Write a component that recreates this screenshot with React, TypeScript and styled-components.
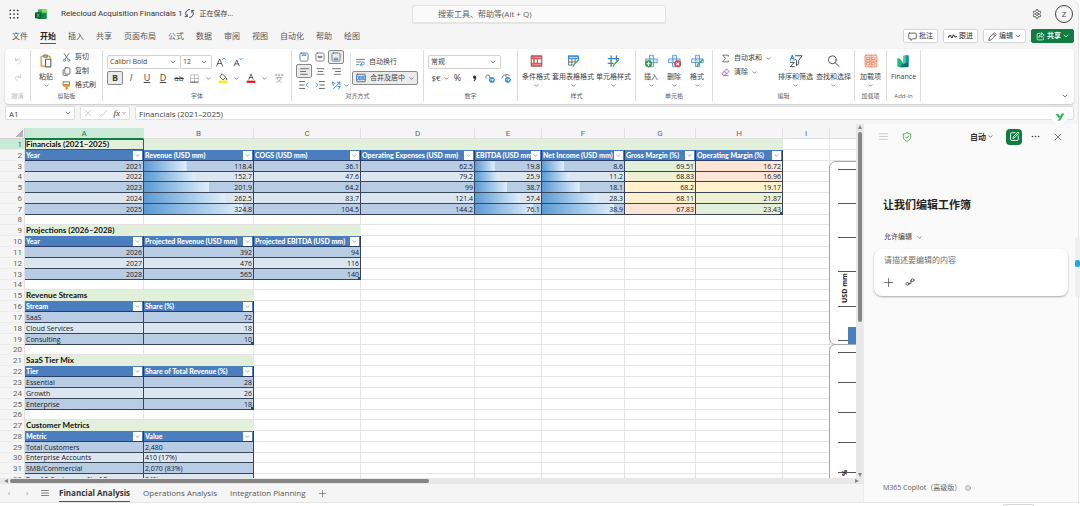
import React from "react";
import styled, { createGlobalStyle, css } from "styled-components";

const ui = `"Open Sans", "Noto Sans CJK SC", sans-serif`;
const cellFont = `Lato, "Noto Sans CJK SC", sans-serif`;

const Global = createGlobalStyle`
  *, *::before, *::after { box-sizing: border-box; }
  html, body { margin: 0; background: #fff; }
  body { font-family: ${ui}; font-size: 7px; line-height: 10px; color: #424242; }
  button, input, select, textarea { font: inherit; color: inherit; margin: 0; }
  button { padding: 0; border: 0; background: none; white-space: nowrap; cursor: pointer; }
  svg { display: block; flex: none; }
`;

/* ---------- icons ---------- */

const Svg = styled.svg.attrs({ viewBox: "0 0 16 16", "aria-hidden": true })<{ $s?: number }>`
  width: ${(p) => p.$s ?? 10}px;
  height: ${(p) => p.$s ?? 10}px;
  fill: none;
  stroke: currentColor;
  stroke-width: 1.3;
  stroke-linecap: round;
  stroke-linejoin: round;
`;

type IconProps = { s?: number };

const Chevron = ({ s = 6 }: IconProps) => (
  <Svg $s={s}><path strokeWidth="2" d="M3 5.5 8 10.5 13 5.5" /></Svg>
);
const Waffle = () => (
  <Svg $s={10}>
    {[2, 8, 14].map((y) => [2, 8, 14].map((x) => (
      <circle key={`${x}-${y}`} cx={x} cy={y} r="1.4" fill="#333" stroke="none" />
    )))}
  </Svg>
);
const ExcelLogo = () => (
  <Svg $s={12}>
    <g stroke="none">
      <path fill="#2fb457" d="M5 1.5h9.5a1.2 1.2 0 0 1 1.2 1.2V8H3.8V2.7A1.2 1.2 0 0 1 5 1.5z" />
      <path fill="#8bdc5c" d="M9.5 1.5h5a1.2 1.2 0 0 1 1.2 1.2v3.2H9.5z" />
      <path fill="#138a43" d="M3.8 7h11.9v6.3a1.2 1.2 0 0 1-1.2 1.2H5a1.2 1.2 0 0 1-1.2-1.2z" />
      <rect x="0" y="5.5" width="8.6" height="8.6" rx="1.4" fill="#0d5c30" />
    </g>
    <path stroke="#7fc79b" strokeWidth="1" d="m3 8 2.600 3.600M5.600 8 3 11.600" />
  </Svg>
);
const Sync = () => (
  <Svg $s={11}>
    <path d="M4.500 12.500A5.700 5.700 0 0 1 6 2.700M11.500 3.500A5.700 5.700 0 0 1 10 13.300M1.700 12.500h3v-3M14.300 3.500h-3v3M6 2.700A5.700 5.700 0 0 1 8 2.300M10 13.300a5.700 5.700 0 0 1-2 .4" />
  </Svg>
);
const Gear = () => (
  <Svg $s={10}>
    <circle cx="8" cy="8" r="2.3" />
    <path d="m6.8 1.2-.4 1.9-1.5.8-1.8-.6L1.9 5.4l1.4 1.3v2.6l-1.4 1.3 1.2 2.1 1.8-.6 1.5.8.4 1.9h2.4l.4-1.9 1.5-.8 1.8.6 1.2-2.1-1.4-1.3V6.7l1.4-1.3-1.2-2.1-1.8.6-1.5-.8-.4-1.9z" />
  </Svg>
);
const CommentIcon = () => (
  <Svg $s={9}><path d="M2.5 2h11A1.2 1.2 0 0 1 14.700 3.200v7.600a1.200 1.200 0 0 1-1.200 1.200H8.500L5 15v-3H2.500a1.200 1.200 0 0 1-1.200-1.200V3.200A1.200 1.200 0 0 1 2.500 2z" /></Svg>
);
const Activity = () => (
  <Svg $s={9}><path strokeWidth="1.800" d="M1 9.500c1.500-4 3.500-4.500 4.500-1.500s2.200 3 3-.5 2.300-2 2.800 0 2 1.500 3.700.5M1 9.500l0-2" /></Svg>
);
const Pencil = () => (
  <Svg $s={9}><path d="m1.500 14.500 1-4.300 8.200-8.200a1.600 1.600 0 0 1 2.300 0l1 1a1.600 1.600 0 0 1 0 2.300l-8.200 8.200zM9.500 3.300l3.300 3.300" /></Svg>
);
const ShareIcon = () => (
  <Svg $s={9}><path d="M7 2.500H4A2 2 0 0 0 2 4.500V12a2 2 0 0 0 2 2h7.500a2 2 0 0 0 2-2v-1.500M10 1.500l4.500 4L10 9.500V7.300c-2.300 0-3.700.7-5 2.700.2-3.500 2-5.700 5-6z" /></Svg>
);
const Undo = () => <Svg $s={8}><path d="M3 2v5h5M3.300 6.700C6 3.500 9.500 3 11.700 5.200s1.800 4.800-.2 6.600L8.500 14.500" /></Svg>;
const Redo = () => <Svg $s={8}><path d="M13 2v5H8M12.700 6.700C10 3.500 6.500 3 4.300 5.200s-1.800 4.800.2 6.600l3 2.700" /></Svg>;
const Paste = () => (
  <Svg $s={14}>
    <path stroke="#e8912d" strokeWidth="1.500" d="M6 14H3.500A1 1 0 0 1 2.500 13V3.500a1 1 0 0 1 1-1H5M10 2.500h1.500a1 1 0 0 1 1 1V5" />
    <path stroke="#777" d="M5.500 1.300h4v2.200h-4z" />
    <path fill="#fff" stroke="#666" d="M7.500 6h6v8.700h-6z" />
  </Svg>
);
const Scissors = () => (
  <Svg $s={9}>
    <path stroke="#444" d="m4 1 6.500 10M12 1 5.500 11" />
    <g stroke="#2b88d8"><circle cx="4" cy="13" r="2" /><circle cx="12" cy="13" r="2" /></g>
  </Svg>
);
const Copy = () => (
  <Svg $s={9}><rect x="5" y="1.500" width="9" height="11" rx="1.500" /><path d="M3 4.500a1.500 1.500 0 0 0-1 1.500v7a2 2 0 0 0 2 2h5a2 2 0 0 0 1.700-1" /></Svg>
);
const Brush = () => (
  <Svg $s={9}>
    <path stroke="#555" d="M2.500 1.500h11v5h-11z" />
    <path fill="#f0a33a" stroke="#d87f1b" d="M3 6.500h10v3H9.500V14L7 15V9.500H3z" />
  </Svg>
);
const GrowFont = ({ down }: { down?: boolean }) => (
  <Svg $s={10}>
    {down ? <path d="m2 14 4-9 4 9M3.400 11h5.200" /> : <path d="M1 14.500 5.800 3l4.800 11.500M2.800 10.500h6" />}
    <path stroke="#2b88d8" d={down ? "m10.500 2 2.300 2.500L15 2" : "M10.500 4 12.800 1.500 15 4"} />
  </Svg>
);
const Borders = () => (
  <Svg $s={9}><path strokeWidth="1" stroke="#999" d="M1.500 1.500h13v13h-13zM8 1.500v13M1.500 8h13" /><path stroke="#333" d="M1.500 14.500h13" /></Svg>
);
const FillIcon = () => (
  <Svg $s={10}><path d="m7 1.500 5.500 5.500-4.500 4-4.500-4.500zM13.500 8.500c1 1.300 1 2.300 0 2.700-1-.4-1-1.400 0-2.700" /><path stroke="#f5ee00" strokeWidth="3.500" strokeLinecap="butt" d="M1 14h14" /></Svg>
);
const FontColor = () => (
  <Svg $s={10}><path d="m4.500 10 3.500-8.500 3.500 8.500M5.700 7.200h4.600" /><path stroke="#e81010" strokeWidth="3.500" strokeLinecap="butt" d="M1 14h14" /></Svg>
);
const Phonetic = () => (
  <Svg $s={10} opacity=".45"><path d="M2 2v2h2V2M7 2v2h2V2M12 2v2h2V2M3 7.500h10M8 6v1.500M11.500 7.500c-1 3.500-3.500 6-7 7.500M4.500 7.500c1 3.500 3.500 6 7 7.500" /></Svg>
);
const VAlign = ({ at }: { at: number }) => (
  <Svg $s={10}>
    <rect x="1.500" y="1.500" width="13" height="13" rx="2.500" stroke="#666" />
    <path stroke={at === 8 ? "#555" : "#2b88d8"} d={`M5 ${at - 1}h6M5 ${at + 1}h6`} />
  </Svg>
);
const HAlign = ({ d }: { d: string }) => <Svg $s={9}><path d={d} /></Svg>;
const Indent = ({ right }: { right?: boolean }) => (
  <Svg $s={10}>
    <path d={right ? "M7 2.500h8M8 8h7M7 13.500h8" : "M1 2.500h8M1 8h7M1 13.500h8"} />
    <path stroke="#2b88d8" d={right ? "m1.500 4.500 3.500 3.500-3.500 3.500" : "M14.500 4.500 11 8l3.500 3.500"} />
  </Svg>
);
const Orientation = () => (
  <Svg $s={10}><path stroke="#2b88d8" strokeWidth="1.500" d="M4 14 14 4M10 3.500h4.200v4.200M2 3.500l2 5M2 3.500l4.500 2M11 10.500h4l-3 4" /></Svg>
);
const Wrap = () => (
  <Svg $s={9}><path d="M1 2.500h14M1 7h4M1 12h4" /><path stroke="#2b88d8" strokeWidth="1.500" d="M6.500 7H12a2.500 2.500 0 0 1 0 5H8M10 9.800 7.700 12l2.300 2.300" /></Svg>
);
const Merge = () => (
  <Svg $s={10}>
    <rect x="1.200" y="2" width="13.600" height="12" rx="1" stroke="#555" />
    <path fill="#c9e3f8" stroke="#2b88d8" d="M1.500 5.300h13v5.400h-13z" />
    <path stroke="#1a6fb8" d="M4 8h8M5.500 6.600 4 8l1.500 1.400M10.500 6.600 12 8l-1.500 1.400" />
  </Svg>
);
const CommaStyle = () => (
  <Svg $s={9}><path fill="#333" stroke="none" d="M8.200 2.500a3 3 0 0 1 3 3.200c0 3.300-1.700 6.200-4.200 7.500l-.8-1c1.200-.9 2-2.100 2.200-3.700A2.800 2.800 0 0 1 5.300 5.500a3 3 0 0 1 2.900-3z" /></Svg>
);
const Decimal = ({ dec }: { dec?: boolean }) => (
  <Svg $s={10}>
    <path stroke="#555" d={dec ? "M1.500 8C3 4 5 2.500 7.500 3c1.500-1 4.500-1 5.500 1M8 3.500V6" : "M1.500 8V5.500C3 2.500 5.500 2 7.500 5v2.500"} />
    <circle cx="11" cy="11" r="4" fill="#2b88d8" stroke="#2b88d8" />
    <path stroke="#fff" d="M8.800 11h4.400M11.700 9.500 13.200 11l-1.500 1.500" />
  </Svg>
);
const CondFormat = () => (
  <Svg $s={13}>
    <path fill="#fff" stroke="#666" d="M1.500 2h13v12h-13z" />
    <path fill="#f68a8a" stroke="#d94a4a" d="M2 2h12v3.300H2zM2 10.700h12V14H2z" />
    <path fill="#fff" stroke="#d94a4a" d="M5 5.300h4v5.400H5z" /><path stroke="#888" d="M4.500 2v12" />
  </Svg>
);
const PenOver = () => <path stroke="#3aa757" strokeWidth="1.600" d="m7.500 14.500 1.200-2.200 5.800-5.800" />;
const TableFormat = () => (
  <Svg $s={13}>
    <path stroke="#555" strokeWidth="1" d="M2 2h12v4M2 2v11h4M6 5.500V13M10 5.500V9M2 9.200h8" />
    <path fill="#a9d3f5" stroke="#2b88d8" d="M2 2h12v3.300H2z" /><PenOver />
  </Svg>
);
const CellStyles = () => (
  <Svg $s={13}><path stroke="#555" d="M5 1.500v13M11.500 1.500V7" /><path stroke="#2b88d8" strokeWidth="1.400" d="M1.500 5h13M1.500 11h6" /><PenOver /></Svg>
);
const CellsBase = () => (
  <>
    <path fill="#dcecfa" stroke="#4a90cf" strokeWidth="1" d="M6 1h4.500v14H6z" />
    <path fill="#dcecfa" stroke="#4a90cf" strokeWidth="1" d="M1 5.500h14v4.500H1zM6 5.500V10M10.500 5.500V10" />
  </>
);
const CellInsert = () => (
  <Svg $s={13}><CellsBase /><circle cx="4.300" cy="11.500" r="3.700" fill="#2f9e44" stroke="#2f9e44" /><path stroke="#fff" d="M4.300 9.500v4M2.300 11.500h4" /></Svg>
);
const CellDelete = () => (
  <Svg $s={13}><CellsBase /><circle cx="12" cy="11.500" r="3.700" fill="#e04545" stroke="#e04545" /><path stroke="#fff" d="m10.700 10.200 2.600 2.600M13.300 10.200l-2.600 2.600" /></Svg>
);
const CellFormat = () => <Svg $s={13}><CellsBase /><PenOver /></Svg>;
const Sigma = () => <Svg $s={9}><path d="M13 4V2H3l5 6-5 6h10v-2" /></Svg>;
const Eraser = () => (
  <Svg $s={9}><path stroke="#9b4db5" fill="#f1def7" d="m2 9.500 7-7a1.500 1.500 0 0 1 2.100 0l2.400 2.400a1.500 1.500 0 0 1 0 2.100l-6 6H5z" /><path stroke="#9b4db5" d="m5.500 6 4.500 4.500M5 13.500h8" /></Svg>
);
const SortFilter = () => (
  <Svg $s={14}>
    <path stroke="#2b88d8" d="m1.500 7 2.200-5.500L6 7M2.300 5.200H5" />
    <path strokeWidth="1.100" d="M1.500 9.500h4.500l-4.500 5H6M7.500 2h7.500l-4 5.500v3.500l-2.500 2.500v-6L7.500 6" />
  </Svg>
);
const Search = () => <Svg $s={13}><circle cx="6.500" cy="6.500" r="4.800" strokeWidth="1.100" /><path strokeWidth="1.100" d="m10 10 4.700 4.700" /></Svg>;
const AddIns = () => (
  <Svg $s={14}>
    <g stroke="#e2714a" strokeWidth="1"><rect x="1.300" y="1.300" width="13.400" height="13.400" rx="1" />
      <path d="M3.500 3.500h3v3h-3zM9.500 3.500h3v3h-3zM3.500 9.500h3v3h-3zM9.500 9.500h3v3h-3zM8 1.500v13M1.500 8h13" /></g>
  </Svg>
);
const FinanceLogo = () => (
  <Svg $s={14}>
    <g stroke="none">
      <path fill="#1eb980" d="M1.500 4.500c3 0 5 3 6.500 5.500v5H3a1.500 1.500 0 0 1-1.500-1.500z" />
      <path fill="#0f6b74" d="M8 10 14.500 4v9.500A1.500 1.500 0 0 1 13 15H5z" />
      <path fill="#57d08b" d="M8 3.500c0-1.300 1-2 2.300-2h4.200v6.500L8 12z" />
      <path fill="#1b8fb3" d="M11 1.500h2a1.500 1.500 0 0 1 1.500 1.500v6L11 11z" />
    </g>
  </Svg>
);
const Cross = ({ s = 8 }: IconProps) => <Svg $s={s}><path d="m2 2 12 12M14 2 2 14" /></Svg>;
const Check = () => <Svg $s={9}><path d="m1.500 8.500 4.500 4.500L15 3" /></Svg>;
const Menu = ({ s = 9 }: IconProps) => <Svg $s={s}><path d="M1 3h14M1 8h14M1 13h14" /></Svg>;
const Plus = ({ s = 8 }: IconProps) => <Svg $s={s}><path d="M8 1v14M1 8h14" /></Svg>;
const Shield = () => <Svg $s={10}><path d="M8 1c2 1.500 4 2 6 2v4.500c0 3.500-2.500 6-6 7.500-3.500-1.500-6-4-6-7.500V3c2 0 4-.5 6-2zM5.300 8l2 2 3.500-3.800" /></Svg>;
const Compose = () => <Svg $s={11}><path d="M9 2.500H4A1.700 1.700 0 0 0 2.300 4.200V12A1.700 1.700 0 0 0 4 13.700h7.800a1.700 1.700 0 0 0 1.700-1.700V7M6 10.200l.5-2L13 1.700l1.500 1.500L8 9.700z" /></Svg>;
const LinkIcon = () => <Svg $s={10}><circle cx="3.800" cy="11" r="2.300" /><circle cx="12.200" cy="5" r="2.300" /><path strokeWidth="1.100" d="M6 11.800c3.800.6 1.500-6.500 4-7.300M5.800 10c2 0 1.500 1.500 3 1s.7-4 2-4.500" /></Svg>;
const Info = () => <Svg $s={6}><circle cx="8" cy="8" r="6.500" /><path d="M8 7.500v3.500M8 5v.2" /></Svg>;
const Dots = () => (
  <Svg $s={9}>{[2.5, 8, 13.5].map((x) => <circle key={x} cx={x} cy="8" r="1.300" fill="#333" stroke="none" />)}</Svg>
);
const Leaf = () => (
  <Svg $s={10}>
    <path fill="#2fb457" stroke="none" d="M1 3h4.500l2.700 4.200L6.500 10z" />
    <path fill="#2fb457" stroke="none" d="M10.500 2.500h4.500L8.500 13 4 14.500l2-3.500z" />
  </Svg>
);

/* ---------- shell ---------- */

const Page = styled.div`
  display: flex;
  flex-direction: column;
  height: 100vh;
  min-height: 400px;
  padding-right: 1px;
  background: #fff;
`;
const Shell = styled.div`
  flex: 1;
  min-height: 0;
  display: flex;
  flex-direction: column;
  background: #f5f5f5;
  border: solid #e6e6e6;
  border-width: 0 1px 1px 0;
  border-radius: 0 6px 0 0;
`;
const BottomEdge = styled.footer`
  display: flex;
  justify-content: flex-end;
  height: 3px;
  padding: 1px 45px 0 0;
  overflow: hidden;
  &::after {
    content: "";
    width: 31px;
    border: solid #d8d8d8;
    border-width: 1px 1px 0;
    border-radius: 2px 2px 0 0;
  }
`;
const TopBar = styled.header`
  display: grid;
  grid-template-columns: 1fr 254px 1fr;
  align-items: center;
  height: 27px;
  padding: 0 5px;
`;
const TopLeft = styled.div`
  display: flex;
  align-items: center;
  padding-left: 4px;
  svg + svg { margin-left: 16px; }
`;
const FileName = styled.h1`
  margin: 0 2px 0 14px;
  font-family: Roboto, sans-serif;
  font-size: 8px;
  font-weight: 400;
  color: #333;
  white-space: nowrap;
`;
const SaveState = styled.span`
  margin-left: 4px;
  white-space: nowrap;
`;
const SearchBox = styled.input`
  width: 100%;
  height: 18px;
  padding: 0 25px;
  border: 1px solid #e3e3e3;
  border-radius: 2px;
  background: #fafafa;
  box-shadow: 0 1px 1px #0001;
  font-size: 8px;
  &::placeholder { color: #616161; opacity: 1; }
`;
const TopRight = styled.div`
  display: flex;
  justify-content: flex-end;
  align-items: center;
  gap: 13px;
`;
const Avatar = styled.button`
  width: 18px;
  height: 18px;
  border: 1px solid #444;
  border-radius: 50%;
  font-size: 8px;
`;
const TabRow = styled.div`
  display: flex;
  justify-content: space-between;
  align-items: flex-start;
  height: 22px;
  padding: 2px 4px 0 12px;
`;
const Tabs = styled.nav`
  display: flex;
  gap: 12px;
`;
const Tab = styled.button<{ $on?: boolean }>`
  height: 15px;
  font-size: 8px;
  line-height: 14px;
  color: #555;
  border-bottom: 1px solid transparent;
  ${(p) => p.$on && css`
    color: #242424;
    font-weight: 700;
    border-color: #107c41;
  `}
`;
const Actions = styled.div`
  display: flex;
  gap: 5px;
`;
const Action = styled.button<{ $primary?: boolean }>`
  display: flex;
  align-items: center;
  gap: 2px;
  height: 14px;
  padding: 0 4px;
  border: 1px solid #d6d6d6;
  border-radius: 2px;
  background: #fff;
  color: #333;
  ${(p) => p.$primary && css`
    border-color: #107c41;
    background: #107c41;
    color: #fff;
    font-weight: 700;
  `}
`;

/* ---------- ribbon ---------- */

const Ribbon = styled.section`
  display: flex;
  height: 55px;
  margin: 0 4px 0 5px;
  padding: 1px 0 3px;
  border-radius: 4px;
  background: #fff;
  box-shadow: 0 1px 2px #0003;
`;
const Group = styled.div<{ $w: number }>`
  display: flex;
  flex-direction: column;
  width: ${(p) => p.$w}px;
  border-right: 1px solid #dcdcdc;
`;
const GroupBody = styled.div<{ $gap?: number; $pad?: number }>`
  flex: 1;
  display: flex;
  justify-content: ${(p) => (p.$pad === undefined ? "center" : "flex-start")};
  gap: ${(p) => p.$gap ?? 0}px;
  padding: 0 ${(p) => p.$pad ?? 0}px;
`;
const GroupLabel = styled.div<{ $dim?: boolean }>`
  height: 9px;
  font-size: 6px;
  line-height: 9px;
  text-align: center;
  color: ${(p) => (p.$dim ? "#b5b5b5" : "#616161")};
  white-space: nowrap;
`;
const Stack = styled.div<{ $gap?: number; $top?: number }>`
  display: flex;
  flex-direction: column;
  gap: ${(p) => p.$gap ?? 0}px;
  padding-top: ${(p) => p.$top ?? 0}px;
`;
const Line = styled.div<{ $gap?: number }>`
  display: flex;
  align-items: center;
  gap: ${(p) => p.$gap ?? 0}px;
`;
const BigButton = styled.button`
  display: flex;
  flex-direction: column;
  align-items: center;
  padding-top: 4px;
  svg:first-child { height: 14px; }
  span { margin-top: 4px; }
  span + svg { margin-top: 1px; }
`;
const Tool = styled.button<{ $on?: boolean; $w?: number; $dim?: boolean; $letter?: boolean }>`
  display: flex;
  align-items: center;
  justify-content: center;
  width: ${(p) => p.$w ?? 16}px;
  height: 14px;
  border: 1px solid transparent;
  border-radius: 2px;
  font-size: ${(p) => (p.$letter ? 9 : 8)}px;
  color: ${(p) => (p.$dim ? "#bdbdbd" : "#424242")};
  ${(p) => p.$on && css`
    border-color: #8a8a8a;
    background: #ebebeb;
  `}
`;
const TextTool = styled.button<{ $on?: boolean }>`
  display: flex;
  align-items: center;
  gap: 4px;
  height: 14px;
  padding: 0 3px;
  border: 1px solid transparent;
  border-radius: 2px;
  ${(p) => p.$on && css`
    border-color: #8a8a8a;
    background: #ebebeb;
  `}
`;
const SelectWrap = styled.label<{ $w: number }>`
  display: flex;
  align-items: center;
  width: ${(p) => p.$w}px;
  height: 14px;
  padding-right: 4px;
  border: 1px solid #d1d1d1;
  border-radius: 2px;
  background: #fff;
  & + & { margin-left: -1px; }
`;
const Select = styled.select`
  flex: 1;
  min-width: 0;
  height: 12px;
  padding: 0 2px;
  border: 0;
  background: none;
  appearance: none;
`;
const Rule = styled.div`
  width: 1px;
  height: 38px;
  margin-top: 3px;
  background: #e0e0e0;
`;
const Collapse = styled.button`
  align-self: flex-end;
  margin: 0 6px 2px auto;
`;

const Picker = ({ label, value, w }: { label: string; value: string; w: number }) => (
  <SelectWrap $w={w}>
    <Select aria-label={label} defaultValue={value}><option>{value}</option></Select>
    <Chevron />
  </SelectWrap>
);
const Big = ({ icon, text, menu = true }: { icon: React.ReactNode; text: string; menu?: boolean }) => (
  <BigButton>{icon}<span>{text}</span>{menu && <Chevron s={5} />}</BigButton>
);

/* ---------- formula bar ---------- */

const FormulaRow = styled.div`
  display: flex;
  gap: 5px;
  height: 14px;
  margin: 2px 4px 4px 5px;
`;
const FieldBox = styled.div<{ $w?: number }>`
  display: flex;
  align-items: center;
  justify-content: space-between;
  ${(p) => (p.$w ? `width: ${p.$w}px` : "flex: 1")};
  padding: 0 3px;
  border: 1px solid #dedede;
  border-radius: 2px;
  background: #fff;
`;
const Field = styled.input`
  flex: 1;
  min-width: 0;
  height: 12px;
  padding: 0;
  border: 0;
  background: none;
  font-size: 8px;
`;
const Fx = styled.i`
  font-family: "Liberation Serif", serif;
  font-size: 9px;
`;
const LeafBadge = styled.div`
  position: absolute;
  z-index: 1;
  right: 10px;
  top: -16px;
  display: grid;
  place-items: center;
  width: 17px;
  height: 17px;
  border-radius: 50%;
  background: #fff;
  box-shadow: 0 0 2px #0001;
`;

/* ---------- sheet ---------- */

const Main = styled.main`
  flex: 1;
  min-height: 0;
  display: flex;
`;
const SheetPane = styled.section`
  flex: 1;
  min-width: 0;
  display: flex;
  flex-direction: column;
`;
const GridRow = styled.div`
  flex: 1;
  min-height: 0;
  display: flex;
`;
const GridView = styled.div`
  position: relative;
  flex: 1;
  min-width: 0;
  margin-top: 4px;
  overflow: hidden;
  background: #fff;
`;
const Grid = styled.table`
  width: 940px;
  table-layout: fixed;
  border-collapse: separate;
  border-spacing: 0;
  font-family: ${cellFont};
  font-size: 7px;
  line-height: 9px;
  color: #222;
`;
const Row = styled.tr<{ $tight?: boolean }>`
  height: ${(p) => (p.$tight ? 10 : 11)}px;
`;
const ColHead = styled.th<{ $on?: boolean }>`
  padding: 0;
  border: solid #e0e0e0;
  border-width: 0 1px 1px 0;
  background: ${(p) => (p.$on ? "#c9ead6" : "#f5f5f5")};
  color: ${(p) => (p.$on ? "#217346" : "#666")};
  font-family: Roboto, sans-serif;
  font-size: 8px;
  font-weight: 400;
  ${(p) => p.$on && "border-bottom-color: #107c41;"}
`;
const RowHead = styled(ColHead)`
  padding-right: 2px;
  text-align: right;
  border-bottom-color: #ececec;
`;
const Corner = styled.td`
  padding: 0;
  border: solid #d0d0d0;
  border-width: 0 1px 1px 0;
  background: linear-gradient(135deg, transparent 50%, #b5b5b5 50%) no-repeat right 1px bottom 1px / 7px 7px #f5f5f5;
`;

type Kind = "blank" | "title" | "head" | "odd" | "even";
const Cell = styled.td<{ $kind: Kind; $left?: boolean; $tint?: string; $bar?: number; $end?: boolean; $active?: boolean }>`
  position: relative;
  padding: 0 1px;
  overflow: hidden;
  white-space: nowrap;
  text-align: ${(p) => (p.$left ? "left" : "right")};
  border: solid #e4e4e4;
  border-width: 0 1px 1px 0;
  ${(p) => p.$kind === "title" && css`
    background: #e2efda;
    border-color: #e2efda;
    font-size: 8px;
    font-weight: 700;
    color: #111;
    overflow: visible;
  `}
  ${(p) => p.$kind === "head" && css`
    background: #4a7ebf;
    border-color: #2a3f63;
    font-weight: 900;
    color: #fff;
  `}
  ${(p) => (p.$kind === "odd" || p.$kind === "even") && css`
    font-family: ${ui};
    background-color: ${p.$tint ?? (p.$kind === "odd" ? "#b8cce4" : "#dce6f1")};
    border-color: #3a4658;
  `}
  ${(p) => p.$bar && css`
    background-image: linear-gradient(90deg, #5b9bd5, #dfeefb);
    background-repeat: no-repeat;
    background-size: ${p.$bar}% 100%;
  `}
  ${(p) => p.$end && css`
    &::after {
      content: "";
      position: absolute;
      right: 0;
      bottom: 0;
      width: 2px;
      height: 2px;
      background: #1f4e8c;
    }
  `}
  ${(p) => p.$active && css`
    outline: 1px solid #107c41;
    outline-offset: -1px;
  `}
`;
const HeadInner = styled.div`
  display: flex;
  align-items: center;
  height: 9px;
  span { flex: 1; min-width: 0; overflow: hidden; }
`;
const Filter = styled.button`
  display: grid;
  place-items: center;
  width: 9px;
  height: 9px;
  background: #fff;
  color: #777;
`;

type Block = {
  title: string; span: number; heads: string[]; rows: string[][];
  leftCols?: number; open?: boolean;
};
const blocks: Block[] = [
  {
    title: "Financials (2021–2025)", span: 8,
    heads: ["Year", "Revenue (USD mm)", "COGS (USD mm)", "Operating Expenses (USD mm)", "EBITDA (USD mm)", "Net Income (USD mm)", "Gross Margin (%)", "Operating Margin (%)"],
    rows: [
      ["2021", "118.4", "36.1", "62.5", "19.8", "8.6", "69.51", "16.72"],
      ["2022", "152.7", "47.6", "79.2", "25.9", "11.2", "68.83", "16.96"],
      ["2023", "201.9", "64.2", "99", "38.7", "18.1", "68.2", "19.17"],
      ["2024", "262.5", "83.7", "121.4", "57.4", "28.3", "68.11", "21.87"],
      ["2025", "324.8", "104.5", "144.2", "76.1", "38.9", "67.83", "23.43"],
    ],
  },
  {
    title: "Projections (2026–2028)", span: 3,
    heads: ["Year", "Projected Revenue (USD mm)", "Projected EBITDA (USD mm)"],
    rows: [["2026", "392", "94"], ["2027", "476", "116"], ["2028", "565", "140"]],
  },
  {
    title: "Revenue Streams", span: 2, leftCols: 1, heads: ["Stream", "Share (%)"],
    rows: [["SaaS", "72"], ["Cloud Services", "18"], ["Consulting", "10"]],
  },
  {
    title: "SaaS Tier Mix", span: 2, leftCols: 1, heads: ["Tier", "Share of Total Revenue (%)"],
    rows: [["Essential", "28"], ["Growth", "26"], ["Enterprise", "18"]],
  },
  {
    title: "Customer Metrics", span: 2, leftCols: 2, open: true, heads: ["Metric", "Value"],
    rows: [["Total Customers", "2,480"], ["Enterprise Accounts", "410 (17%)"], ["SMB/Commercial", "2,070 (83%)"], ["Top 10 Customers % of Rev", "24%"]],
  },
];
const bars: Record<number, number[]> = {
  1: [39, 47, 60, 75, 91],
  4: [30, 36, 49, 68, 88],
  5: [27, 33, 46, 68, 88],
};
const tints: Record<number, string[]> = {
  6: ["#e2efda", "#eef0d3", "#fff2cc", "#feefce", "#fce4d6"],
  7: ["#fce4d6", "#fce6d5", "#fff2cc", "#eef0d3", "#e2efda"],
};
const columns = [119, 110, 107, 114, 67, 83, 71, 87, 47, 110];
const letters = "ABCDEFGHIJ".split("");
const tightRows = [4, 30];

type SheetRow = { kind: Kind; block?: Block; index?: number };
const sheetRows: SheetRow[] = blocks.flatMap((block, b) => [
  ...(b ? [{ kind: "blank" as Kind }] : []),
  { kind: "title" as Kind, block },
  { kind: "head" as Kind, block },
  ...block.rows.map((_, index) => ({ kind: (index % 2 ? "even" : "odd") as Kind, block, index })),
]);

const renderCell = (row: SheetRow, c: number, first: boolean) => {
  const { block, kind, index = 0 } = row;
  if (!block || c >= block.span) return <Cell key={c} $kind="blank" />;
  if (kind === "title") {
    return <Cell key={c} $kind="title" $left $active={first && c === 0}>{c === 0 ? block.title : null}</Cell>;
  }
  if (kind === "head") {
    return (
      <Cell key={c} as="th" $kind="head" $left>
        <HeadInner><span>{block.heads[c]}</span><Filter aria-label={`筛选 ${block.heads[c]}`}><Chevron s={5} /></Filter></HeadInner>
      </Cell>
    );
  }
  const main = block.span === 8;
  return (
    <Cell
      key={c}
      $kind={kind}
      $left={c < (block.leftCols ?? 0)}
      $bar={main ? bars[c]?.[index] : undefined}
      $tint={main ? tints[c]?.[index] : undefined}
      $end={!block.open && index === block.rows.length - 1 && c === block.span - 1}
    >
      {block.rows[index][c]}
    </Cell>
  );
};

const Charts = styled.svg`
  position: absolute;
  left: 829px;
  top: 33px;
  width: 240px;
  height: 330px;
  text { font: 700 7px ${ui}; fill: #222; }
`;
const ChartArt = () => (
  <Charts viewBox="0 0 240 330" aria-label="图表">
    <rect x=".5" y=".5" width="239" height="183" rx="6" fill="#fff" stroke="#a6a6a6" />
    <path stroke="#555" d="M9 8.500h220M9 42.500h220M9 76.500h220M9 110.500h220M9 145.500h220M9 179.500h220" />
    <rect x="19" y="166" width="24" height="17" fill="#4a7ebf" />
    <text transform="rotate(-90 18 142)" x="18" y="142">USD mm</text>
    <rect x=".5" y="183.500" width="239" height="183" rx="6" fill="#fff" stroke="#a6a6a6" />
    <path stroke="#555" d="M9 191.500h220M9 221.500h220M9 251.500h220M9 281.500h220M9 311.500h220" />
    <text transform="rotate(-90 18 315)" x="18" y="315">%</text>
  </Charts>
);
const VBar = styled.div`
  display: flex;
  flex-direction: column;
  align-items: center;
  justify-content: space-between;
  width: 7px;
  padding: 1px 0;
  background: #e8e8e8;
`;
const HBar = styled.div`
  display: flex;
  align-items: center;
  justify-content: space-between;
  height: 6px;
  padding: 0 4px;
  background: #e8e8e8;
`;
const Thumb = styled.div<{ $v?: boolean }>`
  ${(p) => (p.$v ? "width: 4px; flex: 0 0 54%; margin: 3px 0 auto;" : "height: 4px; flex: 0 0 49%; margin: 0 auto 0 2px;")}
  border-radius: 2px;
  background: #858585;
`;
const Arrow = styled.svg`
  width: 4px;
  height: 4px;
  fill: #858585;
`;
const SheetTabs = styled.nav`
  display: flex;
  align-items: center;
  gap: 13px;
  height: 18px;
  padding-left: 5px;
`;
const SheetIcon = styled.button<{ $dim?: boolean }>`
  display: grid;
  place-items: center;
  width: 8px;
  height: 10px;
  font-size: 9px;
  color: ${(p) => (p.$dim ? "#aaa" : "#444")};
`;
const SheetTab = styled.button<{ $on?: boolean }>`
  height: 18px;
  padding-top: 1px;
  font-size: 8px;
  color: #555;
  border-bottom: 1px solid transparent;
  ${(p) => p.$on && css`
    font-weight: 700;
    color: #333;
    border-color: #107c41;
  `}
`;

/* ---------- copilot pane ---------- */

const Copilot = styled.aside`
  position: relative;
  display: flex;
  flex-direction: column;
  width: 215px;
  padding: 4px 10px 9px;
  background: #fafafa;
  border-left: 1px solid #ebebeb;
`;
const PaneHead = styled.div`
  display: flex;
  align-items: center;
  height: 17px;
  padding: 0 6px 0 5px;
`;
const PaneButton = styled.button<{ $c?: string; $gap?: number; $push?: boolean }>`
  display: flex;
  align-items: center;
  gap: 2px;
  margin-left: ${(p) => (p.$push ? "auto" : `${p.$gap ?? 0}px`)};
  font-size: 8px;
  color: ${(p) => p.$c ?? "#333"};
`;
const ComposeButton = styled(PaneButton)`
  justify-content: center;
  width: 16px;
  height: 16px;
  border-radius: 4px;
  background: #107c41;
  color: #fff;
`;
const PaneTitle = styled.h2`
  margin: 50px 0 0 9px;
  font-size: 11px;
  line-height: 20px;
  font-weight: 700;
  color: #242424;
`;
const ModeButton = styled.button`
  display: flex;
  align-items: center;
  align-self: flex-start;
  gap: 5px;
  margin: 16px 0 6px 10px;
  height: 12px;
`;
const Prompt = styled.form`
  height: 47px;
  padding: 5px 10px 9px;
  border-radius: 8px;
  background: #fff;
  box-shadow: 0 1px 2px #0005;
  display: flex;
  flex-direction: column;
  justify-content: space-between;
`;
const PromptText = styled.textarea`
  height: 13px;
  padding: 0;
  border: 0;
  resize: none;
  outline: none;
  overflow: hidden;
  background: none;
  font-size: 8px;
  line-height: 12px;
  &::placeholder { color: #707070; opacity: 1; }
`;
const PaneFoot = styled.div`
  display: flex;
  align-items: center;
  gap: 4px;
  margin: auto 0 0 9px;
  color: #616161;
`;
const SideMark = styled.div`
  position: absolute;
  right: -2px;
  top: 113px;
  width: 5px;
  height: 60px;
  padding-top: 23px;
  background: #f0f0f0;
  border-radius: 2px 0 0 2px;
  &::before {
    content: "";
    display: block;
    height: 7px;
    border-radius: 2px;
    background: #1ea7e0;
  }
`;

const tabs = ["文件", "开始", "插入", "共享", "页面布局", "公式", "数据", "审阅", "视图", "自动化", "帮助", "绘图"];

export default function App() {
  return (
    <Page>
      <Global />
      <Shell>
        <TopBar>
          <TopLeft>
            <Waffle /><ExcelLogo />
            <FileName>Relecloud Acquisition Financials 1</FileName>
            <Sync /><SaveState>正在保存...</SaveState>
          </TopLeft>
          <SearchBox type="search" aria-label="搜索" placeholder="搜索工具、帮助等(Alt + Q)" />
          <TopRight>
            <button aria-label="设置"><Gear /></button>
            <Avatar>Z</Avatar>
          </TopRight>
        </TopBar>

        <TabRow>
          <Tabs>{tabs.map((t) => <Tab key={t} $on={t === "开始"}>{t}</Tab>)}</Tabs>
          <Actions>
            <Action><CommentIcon />批注</Action>
            <Action><Activity />跟进</Action>
            <Action><Pencil />编辑<Chevron /></Action>
            <Action $primary><ShareIcon />共享<Chevron /></Action>
          </Actions>
        </TabRow>

        <Ribbon>
          <Group $w={26}>
            <GroupBody>
              <Stack $gap={3} $top={4}>
                <Tool $dim aria-label="撤消"><Undo /></Tool>
                <Tool $dim aria-label="恢复"><Redo /></Tool>
              </Stack>
            </GroupBody>
            <GroupLabel $dim>撤消</GroupLabel>
          </Group>

          <Group $w={72}>
            <GroupBody $gap={5} $pad={8}>
              <Big icon={<Paste />} text="粘贴" />
              <Stack>
                <TextTool><Scissors />剪切</TextTool>
                <TextTool><Copy />复制</TextTool>
                <TextTool><Brush />格式刷</TextTool>
              </Stack>
            </GroupBody>
            <GroupLabel>剪贴板</GroupLabel>
          </Group>

          <Group $w={189}>
            <GroupBody $pad={4}>
              <Stack $gap={2} $top={5}>
                <Line>
                  <Picker label="字体" value="Calibri Bold" w={74} />
                  <Picker label="字号" value="12" w={32} />
                  <Tool $w={18} aria-label="增大字号"><GrowFont /></Tool>
                  <Tool aria-label="减小字号"><GrowFont down /></Tool>
                </Line>
                <Line>
                  <Tool $letter $on><b>B</b></Tool>
                  <Tool $letter><i>I</i></Tool>
                  <Tool $letter><u>U</u></Tool>
                  <Tool $letter><u>D</u></Tool>
                  <Tool><s>ab</s></Tool>
                  <Tool $w={15} aria-label="边框"><Borders /></Tool>
                  <Tool $w={13} aria-label="边框选项"><Chevron s={5} /></Tool>
                  <Tool $w={15} aria-label="填充颜色"><FillIcon /></Tool>
                  <Tool $w={13} aria-label="填充选项"><Chevron s={5} /></Tool>
                  <Tool $w={15} aria-label="字体颜色"><FontColor /></Tool>
                  <Tool $w={13} aria-label="颜色选项"><Chevron s={5} /></Tool>
                  <Tool aria-label="拼音"><Phonetic /></Tool>
                </Line>
              </Stack>
            </GroupBody>
            <GroupLabel>字体</GroupLabel>
          </Group>

          <Group $w={132}>
            <GroupBody $pad={4} $gap={1}>
              <Stack>
                <Line>
                  <Tool aria-label="顶端对齐"><VAlign at={4.5} /></Tool>
                  <Tool aria-label="垂直居中"><VAlign at={8} /></Tool>
                  <Tool $on aria-label="底端对齐"><VAlign at={11} /></Tool>
                </Line>
                <Line>
                  <Tool $on aria-label="左对齐"><HAlign d="M1 3h14M1 8h9M1 13h12" /></Tool>
                  <Tool aria-label="居中"><HAlign d="M2 3h12M4 8h8M2 13h12" /></Tool>
                  <Tool aria-label="右对齐"><HAlign d="M1 3h14M6 8h9M4 13h11" /></Tool>
                </Line>
                <Line>
                  <Tool aria-label="减少缩进"><Indent /></Tool>
                  <Tool aria-label="增加缩进"><Indent right /></Tool>
                  <Tool aria-label="方向"><Orientation /></Tool>
                  <Chevron s={5} />
                </Line>
              </Stack>
              <Rule />
              <Stack $gap={2} $top={5}>
                <TextTool><Wrap />自动换行</TextTool>
                <TextTool $on><Merge />合并及居中<Chevron s={5} /></TextTool>
              </Stack>
            </GroupBody>
            <GroupLabel>对齐方式</GroupLabel>
          </Group>

          <Group $w={94}>
            <GroupBody $pad={4}>
              <Stack $gap={2} $top={5}>
                <Picker label="数字格式" value="常规" w={73} />
                <Line>
                  <Tool>$€</Tool>
                  <Tool $w={5} aria-label="货币选项"><Chevron s={5} /></Tool>
                  <Tool $letter $w={17}>%</Tool>
                  <Tool aria-label="千位分隔样式"><CommaStyle /></Tool>
                  <Tool aria-label="增加小数位数"><Decimal /></Tool>
                  <Tool aria-label="减少小数位数"><Decimal dec /></Tool>
                </Line>
              </Stack>
            </GroupBody>
            <GroupLabel>数字</GroupLabel>
          </Group>

          <Group $w={118}>
            <GroupBody $gap={2}>
              <Big icon={<CondFormat />} text="条件格式" />
              <Big icon={<TableFormat />} text="套用表格格式" />
              <Big icon={<CellStyles />} text="单元格样式" />
            </GroupBody>
            <GroupLabel>样式</GroupLabel>
          </Group>

          <Group $w={77}>
            <GroupBody $gap={9}>
              <Big icon={<CellInsert />} text="插入" />
              <Big icon={<CellDelete />} text="删除" />
              <Big icon={<CellFormat />} text="格式" />
            </GroupBody>
            <GroupLabel>单元格</GroupLabel>
          </Group>

          <Group $w={142}>
            <GroupBody $pad={4} $gap={3}>
              <Stack $top={1}>
                <TextTool><Sigma />自动求和<Chevron s={5} /></TextTool>
                <TextTool><Eraser />清除<Chevron s={5} /></TextTool>
              </Stack>
              <Big icon={<SortFilter />} text="排序和筛选" />
              <Big icon={<Search />} text="查找和选择" />
            </GroupBody>
            <GroupLabel>编辑</GroupLabel>
          </Group>

          <Group $w={32}>
            <GroupBody><Big icon={<AddIns />} text="加载项" /></GroupBody>
            <GroupLabel>加载项</GroupLabel>
          </Group>
          <Group $w={34}>
            <GroupBody><Big icon={<FinanceLogo />} text="Finance" menu={false} /></GroupBody>
            <GroupLabel>Add-in</GroupLabel>
          </Group>
          <Collapse aria-label="折叠功能区"><Chevron /></Collapse>
        </Ribbon>

        <FormulaRow>
          <FieldBox $w={70}><Field aria-label="名称框" defaultValue="A1" /><Chevron /></FieldBox>
          <FieldBox $w={50}>
            <PaneButton $c="#bbb" aria-label="取消"><Cross /></PaneButton>
            <PaneButton $c="#bbb" aria-label="输入"><Check /></PaneButton>
            <PaneButton aria-label="插入函数"><Fx>fx</Fx><Chevron s={4} /></PaneButton>
          </FieldBox>
          <FieldBox><Field aria-label="编辑栏" defaultValue="Financials (2021–2025)" /></FieldBox>
        </FormulaRow>

        <Main>
          <SheetPane>
            <GridRow>
              <GridView>
                <Grid>
                  <colgroup><col width={25} />{columns.map((w, i) => <col key={i} width={w} />)}</colgroup>
                  <thead>
                    <Row>
                      <Corner />
                      {letters.map((l, i) => <ColHead key={l} $on={i === 0}>{l}</ColHead>)}
                    </Row>
                  </thead>
                  <tbody>
                    {sheetRows.map((row, r) => (
                      <Row key={r} $tight={row.kind === "blank" || tightRows.includes(r + 1)}>
                        <RowHead $on={r === 0}>{r + 1}</RowHead>
                        {columns.map((_, c) => renderCell(row, c, r === 0))}
                      </Row>
                    ))}
                  </tbody>
                </Grid>
                <ChartArt />
              </GridView>
              <VBar>
                <Arrow viewBox="0 0 4 4"><path d="M2 0 4 4H0z" /></Arrow>
                <Thumb $v />
                <Arrow viewBox="0 0 4 4"><path d="M2 4 4 0H0z" /></Arrow>
              </VBar>
            </GridRow>
            <HBar>
              <Arrow viewBox="0 0 4 4"><path d="M0 2 4 0v4z" /></Arrow>
              <Thumb />
              <Arrow viewBox="0 0 4 4"><path d="M4 2 0 0v4z" /></Arrow>
            </HBar>
            <SheetTabs>
              <Line $gap={10}>
                <SheetIcon $dim aria-label="上一个">‹</SheetIcon>
                <SheetIcon $dim aria-label="下一个">›</SheetIcon>
                <SheetIcon aria-label="所有工作表"><Menu s={8} /></SheetIcon>
                <SheetTab $on>Financial Analysis</SheetTab>
              </Line>
              <SheetTab>Operations Analysis</SheetTab>
              <SheetTab>Integration Planning</SheetTab>
              <SheetIcon aria-label="新建工作表"><Plus s={7} /></SheetIcon>
            </SheetTabs>
          </SheetPane>

          <Copilot>
            <LeafBadge><Leaf /></LeafBadge>
            <PaneHead>
              <PaneButton $c="#bdbdbd" aria-label="菜单"><Menu /></PaneButton>
              <PaneButton $c="#2f9e44" $gap={14} aria-label="受保护"><Shield /></PaneButton>
              <PaneButton $push><b>自动</b><Chevron s={5} /></PaneButton>
              <ComposeButton $gap={13} $c="#fff" aria-label="新聊天"><Compose /></ComposeButton>
              <PaneButton $gap={9} aria-label="更多"><Dots /></PaneButton>
              <PaneButton $gap={14} aria-label="关闭"><Cross /></PaneButton>
            </PaneHead>
            <PaneTitle>让我们编辑工作簿</PaneTitle>
            <ModeButton>允许编辑<Chevron s={5} /></ModeButton>
            <Prompt>
              <PromptText aria-label="提示" rows={1} placeholder="请描述要编辑的内容" />
              <Line $gap={12}>
                <button type="button" aria-label="添加"><Plus s={9} /></button>
                <button type="button" aria-label="链接"><LinkIcon /></button>
              </Line>
            </Prompt>
            <PaneFoot>M365 Copilot（高级版）<Info /></PaneFoot>
            <SideMark />
          </Copilot>
        </Main>
      </Shell>
      <BottomEdge />
    </Page>
  );
}
